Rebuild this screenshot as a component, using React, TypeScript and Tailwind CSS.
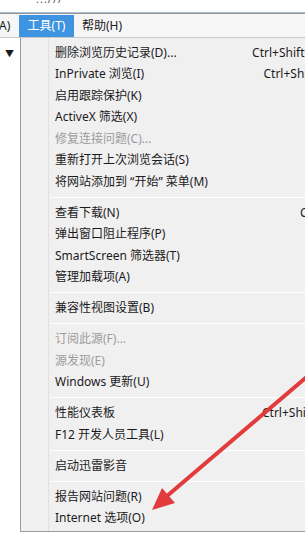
type Item = { label: string; shortcut?: string; disabled?: boolean } | "sep";

const items: Item[] = [
  { label: "删除浏览历史记录(D)...", shortcut: "Ctrl+Shift+Del" },
  { label: "InPrivate 浏览(I)", shortcut: "Ctrl+Shift+P" },
  { label: "启用跟踪保护(K)" },
  { label: "ActiveX 筛选(X)" },
  { label: "修复连接问题(C)...", disabled: true },
  { label: "重新打开上次浏览会话(S)" },
  { label: "将网站添加到 “开始” 菜单(M)" },
  "sep",
  { label: "查看下载(N)", shortcut: "Ctrl+J" },
  { label: "弹出窗口阻止程序(P)" },
  { label: "SmartScreen 筛选器(T)" },
  { label: "管理加载项(A)" },
  "sep",
  { label: "兼容性视图设置(B)" },
  "sep",
  { label: "订阅此源(F)...", disabled: true },
  { label: "源发现(E)", disabled: true },
  { label: "Windows 更新(U)" },
  "sep",
  { label: "性能仪表板", shortcut: "Ctrl+Shift+U" },
  { label: "F12 开发人员工具(L)" },
  "sep",
  { label: "启动迅雷影音" },
  "sep",
  { label: "报告网站问题(R)" },
  { label: "Internet 选项(O)" },
];

export default function App() {
  return (
    <div className="relative w-[305px] h-[536px] overflow-hidden bg-white font-['Noto_Sans','Noto_Sans_CJK_SC',sans-serif] text-[12px] text-[#1b1b1b]">
      {/* address bar remnant */}
      <div className="h-[13px] overflow-hidden bg-white border-b border-[#aebdcc] pl-[36px]">
        <div className="-mt-[9px] text-[11px] text-[#555] tracking-[1px]">...///</div>
      </div>

      {/* menu bar */}
      <div className="flex items-stretch h-[25px] bg-[#f6f6f7] border-t border-[#8e969e] border-b border-b-[#c9c9c9]">
        <div className="w-[20px] shrink-0 flex items-center -ml-[1px]">A)</div>
        <div className="w-[55px] shrink-0 flex items-center justify-center bg-[#3f94e1] text-white mt-[1px]">工具(T)</div>
        <div className="flex items-center pl-[8px]">帮助(H)</div>
      </div>

      <div className="flex">
        {/* left window area */}
        <div className="w-[20px] shrink-0 h-[494px] bg-white pt-[11px] pl-[5px] text-[9px] leading-none">▼</div>

        {/* dropdown menu */}
        <div className="w-[330px] shrink-0 h-[494px] bg-[#f1f0f1] border-l border-b border-[#9b9b9b]">
          <div className="relative h-full pt-[4px]">
            <div className="absolute left-[27px] top-0 bottom-0 w-[1px] bg-[#e2e1e2]" />
            {items.map((it, i) =>
              it === "sep" ? (
                <div key={i} className="h-[9.5px] flex items-center pl-[29px]">
                  <div className="h-[1px] w-full bg-[#d9d8d9] border-b border-white" />
                </div>
              ) : (
                <div
                  key={i}
                  className={
                    "h-[21.5px] flex items-center pl-[34px] pr-[20px] whitespace-nowrap " +
                    (it.disabled ? "text-[#9c9c9c]" : "")
                  }
                >
                  <span className="flex-1">{it.label}</span>
                  {it.shortcut && <span>{it.shortcut}</span>}
                </div>
              )
            )}
          </div>
        </div>
      </div>

      {/* red annotation arrow */}
      <svg className="absolute inset-0 pointer-events-none" width="305" height="536" viewBox="0 0 305 536">
        <line x1="310" y1="374" x2="167" y2="496" stroke="#e23b3b" strokeWidth="4" strokeLinecap="round" />
        <polygon points="152,510 175,503 162,488" fill="#e23b3b" />
      </svg>
    </div>
  );
}
